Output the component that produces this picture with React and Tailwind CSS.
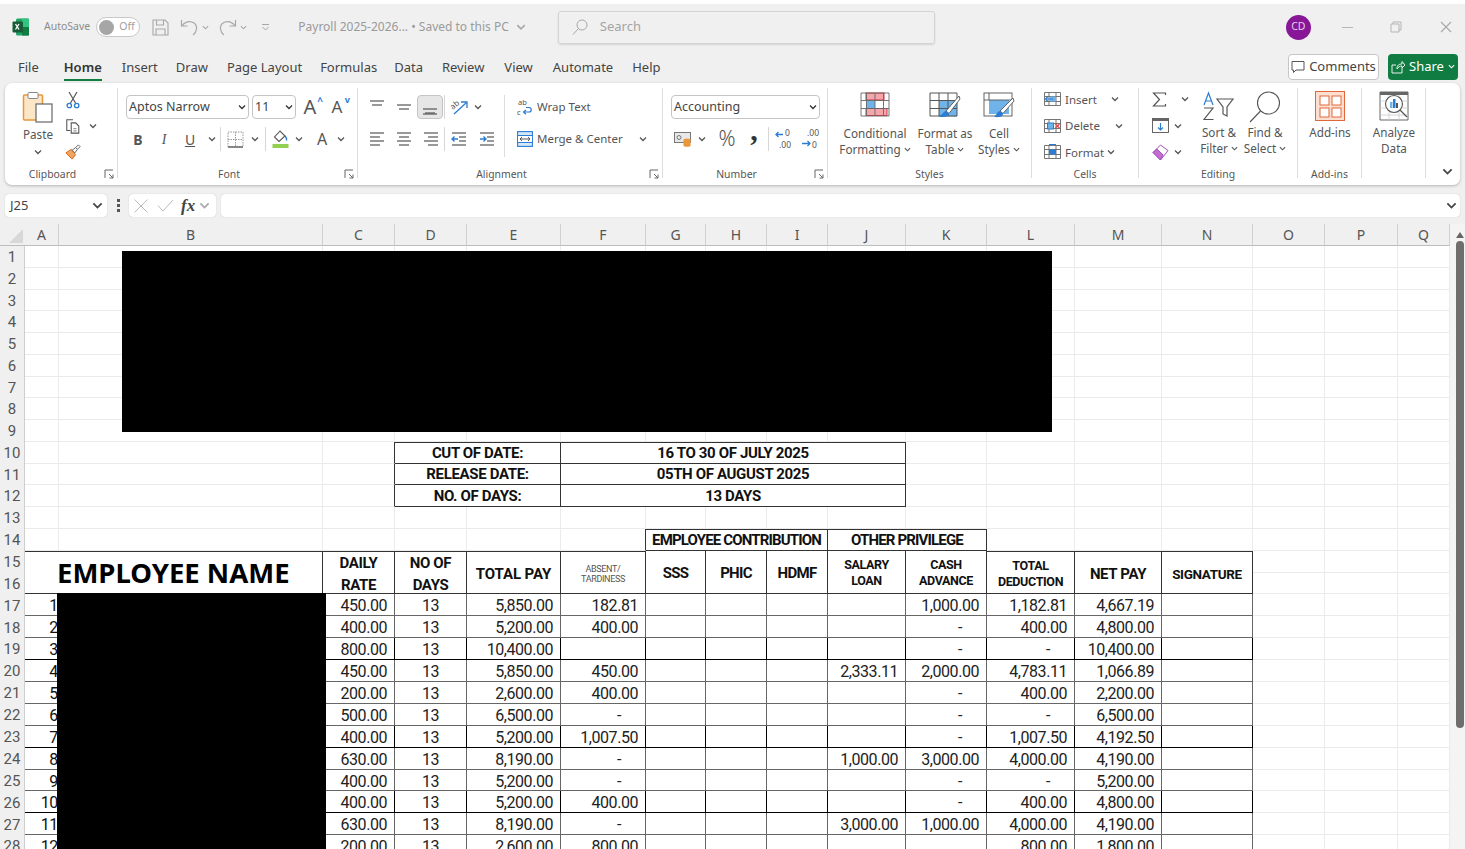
import React from "react";

const Chev = ({ s = 8, c = "#555", w = 1.3 }) => (
  <svg width={s} height={s} viewBox="0 0 8 8" className="shrink-0"><polyline points="1,2.5 4,5.5 7,2.5" fill="none" stroke={c} strokeWidth={w} /></svg>
);
const Btn = ({ w, children, className = "" }) => (
  <div className={`flex items-center justify-center shrink-0 h-full ${className}`} style={{ width: w }}>{children}</div>
);
const VLine = () => <div className="w-px h-[24px] bg-[#d6d6d6] shrink-0" />;

const Launcher = () => (
  <svg width="10" height="10" viewBox="0 0 10 10"><path d="M1 9V1h8M5 5l4 4M9 5.5V9H5.5" fill="none" stroke="#666" strokeWidth="1" /></svg>
);

const Group = ({ w, label, launcher, children, last }) => (
  <div className={`shrink-0 h-[90px] flex flex-col ${last ? "" : "border-r border-[#dcdcdc]"}`} style={{ width: w }}>
    <div className="h-[79px] shrink-0">{children}</div>
    <div className="flex items-center h-[14px] text-[10.4px] text-[#555] leading-[14px]">
      <div className="flex-1 text-center">{label}</div>
      {launcher && <div className="w-[17px] flex justify-center"><Launcher /></div>}
    </div>
  </div>
);

const Lines = ({ kind }) => {
  const ys = [3, 7, 11, 15];
  const spec = {
    l: [[1, 15], [1, 11], [1, 15], [1, 11]],
    c: [[1, 15], [3, 13], [1, 15], [3, 13]],
    r: [[1, 15], [5, 15], [1, 15], [5, 15]],
  }[kind];
  return (
    <svg width="16" height="18" viewBox="0 0 16 18">
      {spec.map((p, i) => <line key={i} x1={p[0]} x2={p[1]} y1={ys[i]} y2={ys[i]} stroke="#555" strokeWidth="1.2" />)}
    </svg>
  );
};
const VAlign = ({ pos }) => {
  const y = { t: 2, m: 6, b: 10 }[pos];
  return (
    <svg width="18" height="16" viewBox="0 0 18 16">
      <line x1="2" x2="16" y1={y} y2={y} stroke="#555" strokeWidth="1.2" />
      <line x1="4" x2="14" y1={y + 4} y2={y + 4} stroke="#555" strokeWidth="1.2" />
      {pos === "b" && <line x1="2" x2="16" y1={15} y2={15} stroke="#555" strokeWidth="1.2" />}
    </svg>
  );
};
const Indent = ({ dir }) => (
  <svg width="16" height="16" viewBox="0 0 16 16">
    {[2, 6, 10, 14].map((y) => <line key={y} x1={y === 2 || y === 14 ? 1 : 8} x2="15" y1={y} y2={y} stroke="#555" strokeWidth="1.2" />)}
    <path d={dir === "l" ? "M7 8H1M3.5 5.5L1 8l2.5 2.5" : "M1 8h6M4.5 5.5L7 8l-2.5 2.5"} fill="none" stroke="#2b7cd3" strokeWidth="1.4" />
  </svg>
);

const Excel = () => (
  <svg width="18" height="18" viewBox="0 0 18 18">
    <rect x="4" y="0.5" width="13" height="17" rx="1.5" fill="#21a366" />
    <rect x="10" y="0.5" width="7" height="8.5" fill="#33c481" />
    <rect x="10" y="9" width="7" height="8.5" fill="#107c41" />
    <rect x="0.5" y="3.5" width="10.5" height="11" rx="1" fill="#185c37" />
    <path d="M3.5 6l3.5 5.5M7 6l-3.5 5.5" stroke="#fff" strokeWidth="1.3" />
  </svg>
);

const Paste = () => (
  <svg width="32" height="32" viewBox="0 0 32 32">
    <rect x="1.5" y="4" width="19" height="25" rx="1" fill="#fbe6c8" stroke="#e8973a" strokeWidth="1.5" />
    <rect x="6" y="1.5" width="10" height="6" rx="1" fill="#fff" stroke="#8a8a8a" />
    <rect x="14" y="13" width="16" height="18" fill="#fff" stroke="#666" strokeWidth="1.2" />
  </svg>
);
const Cut = () => (
  <svg width="14" height="18" viewBox="0 0 14 18">
    <path d="M3 1l6.5 11M11 1L4.5 12" stroke="#555" strokeWidth="1.2" fill="none" />
    <circle cx="3.3" cy="14.5" r="2.2" fill="none" stroke="#2b7cd3" strokeWidth="1.3" />
    <circle cx="10.7" cy="14.5" r="2.2" fill="none" stroke="#2b7cd3" strokeWidth="1.3" />
  </svg>
);
const Copy = () => (
  <svg width="18" height="18" viewBox="0 0 18 18">
    <path d="M9 2H2v12h4" fill="none" stroke="#555" strokeWidth="1.2" />
    <path d="M7 5.5h5l3.5 3.5v8H7z" fill="#fff" stroke="#555" strokeWidth="1.2" />
    <path d="M9.5 12h3.5M9.5 14.5h3.5" stroke="#777" />
  </svg>
);
const Painter = () => (
  <svg width="18" height="18" viewBox="0 0 18 18">
    <path d="M1 10l6-4 5 6-4 5z" fill="#f2a45c" stroke="#d9691f" strokeWidth="1.1" />
    <path d="M8 7l4-3 2 2-3 4z" fill="#fff" stroke="#555" />
    <path d="M12 4l3-3 2 2-3 3" fill="none" stroke="#555" />
  </svg>
);

const Borders = () => (
  <svg width="17" height="17" viewBox="0 0 17 17">
    <path d="M1 1h15v15H1zM8.5 1v15M1 8.5h15" fill="none" stroke="#9a9a9a" strokeDasharray="1.5 1" />
    <line x1="1" x2="16" y1="16" y2="16" stroke="#555" strokeWidth="1.3" />
  </svg>
);
const Fill = () => (
  <svg width="17" height="18" viewBox="0 0 17 18">
    <path d="M8 1L2.5 7 7 11.5 13 6z" fill="#fff" stroke="#555" strokeWidth="1.1" />
    <path d="M13 6c1.5 1.5 2 3 1.5 4.5" fill="none" stroke="#2b7cd3" strokeWidth="1.5" />
    <rect x="0.5" y="14" width="16" height="4" fill="#92d050" />
  </svg>
);
const Orient = () => (
  <svg width="19" height="18" viewBox="0 0 19 18" className="overflow-visible">
    <text x="1" y="9" fontSize="8" fill="#555" transform="rotate(-40 6 8)" fontFamily="Noto Sans, sans-serif">ab</text>
    <path d="M4 16L16 5M11 4h6v6" fill="none" stroke="#2b7cd3" strokeWidth="1.3" />
  </svg>
);
const WrapIcon = () => (
  <svg width="16" height="18" viewBox="0 0 16 18" className="overflow-visible">
    <text x="1" y="7" fontSize="7.5" fill="#555" fontFamily="Noto Sans, sans-serif">ab</text>
    <text x="0" y="17" fontSize="7.5" fill="#555" fontFamily="Noto Sans, sans-serif">c</text>
    <path d="M7 14h5c3 0 3-4.5 0-4.5H9M9 12l-2.5 2L9 16.2" fill="none" stroke="#2b7cd3" strokeWidth="1.2" />
  </svg>
);
const MergeIcon = () => (
  <svg width="16" height="16" viewBox="0 0 16 16">
    <rect x="0.6" y="0.6" width="14.8" height="14.8" fill="#d5e8f8" stroke="#2b7cd3" strokeWidth="1.1" />
    <rect x="1" y="5" width="14" height="6" fill="#fff" />
    <path d="M0.6 4.5h14.8M0.6 11.5h14.8" stroke="#2b7cd3" />
    <path d="M3 8h10M5 6l-2 2 2 2M11 6l2 2-2 2" fill="none" stroke="#555" />
  </svg>
);
const Accounting = () => (
  <svg width="18" height="16" viewBox="0 0 18 16">
    <rect x="0.5" y="1.5" width="16" height="10" fill="#e8e8e8" stroke="#777" />
    <circle cx="5" cy="6.5" r="2" fill="none" stroke="#777" />
    <ellipse cx="13" cy="9" rx="3.5" ry="1.5" fill="#e8973a" />
    <rect x="9.5" y="9" width="7" height="5.5" fill="#e8973a" />
    <ellipse cx="13" cy="14.5" rx="3.5" ry="1.3" fill="#e8973a" />
  </svg>
);
const IncDec = ({ inc }) => (
  <svg width="18" height="18" viewBox="0 0 18 18" className="overflow-visible">
    <text x={inc ? 11 : 6} y="5.5" fontSize="8.5" fill="#555" fontFamily="Noto Sans, sans-serif">{inc ? "0" : ".00"}</text>
    <text x={inc ? 5 : 11} y="17.5" fontSize="8.5" fill="#555" fontFamily="Noto Sans, sans-serif">{inc ? ".00" : "0"}</text>
    <path d={inc ? "M9 4.5H2M4.5 2L2 4.5 4.5 7" : "M1 13.5h8M6.5 11L9 13.5 6.5 16"} fill="none" stroke="#2b7cd3" strokeWidth="1.3" />
  </svg>
);

const CondFmt = () => (
  <svg width="30" height="25" viewBox="0 0 30 25">
    <rect x="6" y="1" width="18" height="7" fill="#f4a6ad" stroke="#d9363e" />
    <rect x="6" y="8" width="9" height="8" fill="#6fb3e8" />
    <rect x="6" y="16.5" width="21" height="7" fill="#f4a6ad" stroke="#d9363e" />
    <path d="M1 1h28v23H1zM1 8.5h28M1 16.5h28M6.5 1v23M15 1v23M23.5 1v23" fill="none" stroke="#666" strokeWidth="0.9" />
  </svg>
);
const TableBrush = () => (
  <svg width="32" height="27" viewBox="0 0 32 27">
    <rect x="10" y="8.5" width="18" height="16" fill="#6fb3e8" />
    <path d="M1 1h27v23H1zM1 8.5h27M1 16.5h27M10 1v23M19 1v23" fill="none" stroke="#555" strokeWidth="1" />
    <path d="M30 4L17 19l3 2.5L31 7z" fill="#fff" stroke="#555" strokeWidth="0.9" />
    <path d="M17 19c-3 .5-3 3.5-7 5.5 5 1.5 9.5 0 10-3z" fill="#2b7cd3" />
  </svg>
);
const CellStyles = () => (
  <svg width="32" height="27" viewBox="0 0 32 27">
    <rect x="1" y="1" width="28" height="23" fill="#fff" stroke="#555" strokeWidth="0.9" />
    <rect x="6" y="8" width="20" height="14" fill="#6fb3e8" />
    <path d="M1 8h28M6 1v7" stroke="#555" strokeWidth="0.9" />
    <path d="M30 6L17 19l3 2.5L31 9z" fill="#fff" stroke="#555" strokeWidth="0.9" />
    <path d="M17 19c-3 .5-3 3.5-6 6 5 .5 9 0 9-3.5z" fill="#2b7cd3" />
  </svg>
);
const CellIns = ({ kind }) => (
  <svg width="17" height="16" viewBox="0 0 17 16">
    <path d="M0.5 1.5h16v13h-16zM0.5 5.5h16M0.5 10.5h16M5 1.5v13M12 1.5v13" fill="none" stroke="#666" strokeWidth="0.9" />
    {kind === "i" && <g><rect x="6" y="5.5" width="6" height="5" fill="#6fb3e8" /><path d="M9 8H1.5M4 5.5L1.5 8 4 10.5" fill="none" stroke="#2b7cd3" strokeWidth="1.2" /></g>}
    {kind === "d" && <g><rect x="3.5" y="5" width="6" height="6" fill="#6fb3e8" stroke="#2b7cd3" /><path d="M11.5 6l4 4M15.5 6l-4 4" stroke="#e04b4b" strokeWidth="1.3" /></g>}
    {kind === "f" && <g><rect x="5" y="5.5" width="7" height="5" fill="#2b7cd3" /><path d="M5 0.5H12" stroke="#2b7cd3" strokeWidth="1.2" /></g>}
  </svg>
);
const Sum = () => (
  <svg width="15" height="15" viewBox="0 0 15 15"><path d="M13.5 3V1H1.5L7.5 7.5 1.5 14h12v-2" fill="none" stroke="#555" strokeWidth="1.2" /></svg>
);
const FillDown = () => (
  <svg width="17" height="15" viewBox="0 0 17 15">
    <rect x="0.5" y="0.5" width="16" height="14" fill="#fff" stroke="#555" strokeWidth="0.9" />
    <rect x="0.5" y="0.5" width="16" height="2.5" fill="#666" />
    <path d="M8.5 5v7M6 9.5l2.5 2.5L11 9.5" fill="none" stroke="#2b7cd3" strokeWidth="1.2" />
  </svg>
);
const Eraser = () => (
  <svg width="17" height="17" viewBox="0 0 17 17">
    <path d="M1 8.5L8.5 1 16 6.5 8.5 16z" fill="#fff" stroke="#a34fb8" strokeWidth="1" />
    <path d="M1 8.5L5 5l6 6-2.5 5z" fill="#c56bd6" stroke="#a34fb8" />
  </svg>
);
const SortIcon = () => (
  <svg width="32" height="30" viewBox="0 0 32 30">
    <path d="M1 14L5.5 2 10 14M2.5 10h6" fill="none" stroke="#2b7cd3" strokeWidth="1.2" />
    <path d="M1 17h9L1 28.5h9.5" fill="none" stroke="#555" strokeWidth="1.2" />
    <path d="M14 8h16l-6 8v9l-4-2v-7z" fill="none" stroke="#555" strokeWidth="1.2" />
  </svg>
);
const FindIcon = () => (
  <svg width="32" height="32" viewBox="0 0 32 32">
    <circle cx="19.5" cy="12" r="11" fill="none" stroke="#555" strokeWidth="1.1" />
    <line x1="11.5" y1="20" x2="1" y2="31" stroke="#555" strokeWidth="1.1" />
  </svg>
);
const AddIns = () => (
  <svg width="30" height="30" viewBox="0 0 30 30">
    <rect x="0.5" y="0.5" width="29" height="29" fill="#fbe0d2" stroke="#e0673a" />
    <rect x="5" y="5" width="9" height="9" fill="#fff" stroke="#e0673a" />
    <rect x="17" y="5" width="9" height="9" fill="#fff" stroke="#e0673a" />
    <rect x="5" y="17" width="9" height="9" fill="#fff" stroke="#e0673a" />
    <rect x="17" y="17" width="9" height="9" fill="#fff" stroke="#e0673a" />
  </svg>
);
const Analyze = () => (
  <svg width="30" height="30" viewBox="0 0 30 30">
    <path d="M1 1h28v28H1z" fill="#fff" stroke="#555" strokeWidth="0.9" />
    <rect x="1" y="1" width="28" height="3" fill="#666" />
    <path d="M1 10h28M1 17h28M1 24h28M10 4v25M20 4v25" stroke="#ccc" strokeWidth="0.8" />
    <circle cx="15" cy="13" r="8.5" fill="#fff" stroke="#555" strokeWidth="1.1" />
    <rect x="11" y="11" width="2.5" height="6" fill="#6fb3e8" />
    <rect x="14" y="8" width="2.5" height="9" fill="#2b7cd3" />
    <rect x="17" y="12" width="2" height="5" fill="#555" />
    <path d="M21 19l7 7" stroke="#555" strokeWidth="1.3" />
  </svg>
);

const TitleBar = () => (
  <div className="flex items-center h-[46px] shrink-0 text-[#8c8c8c]">
    <div className="ml-[12px]"><Excel /></div>
    <span className="ml-[14px] text-[10.5px]">AutoSave</span>
    <div className="ml-[6px] w-[44px] h-[20px] rounded-full border border-[#c8c8c8] bg-white flex items-center pl-[2px] gap-[5px]">
      <div className="w-[15px] h-[15px] rounded-full bg-[#a6a6a6]" />
      <span className="text-[10.5px] text-[#a0a0a0]">Off</span>
    </div>
    <svg className="ml-[12px]" width="17" height="17" viewBox="0 0 17 17"><path d="M1 1h12l3 3v12H1zM4.5 1v5h7V1M4 16v-6h9v6" fill="none" stroke="#a8a8a8" strokeWidth="1.1" /></svg>
    <svg className="ml-[11px]" width="18" height="17" viewBox="0 0 18 17"><path d="M1.5 1v6h6M2 7c2-4 8-6 12-3s3 9-1 12" fill="none" stroke="#a8a8a8" strokeWidth="1.2" /></svg>
    <div className="ml-[4px]"><Chev s={7} c="#a8a8a8" /></div>
    <svg className="ml-[10px]" width="18" height="17" viewBox="0 0 18 17"><path d="M16.5 1v6h-6M16 7c-2-4-8-6-12-3s-3 9 1 12" fill="none" stroke="#a8a8a8" strokeWidth="1.2" /></svg>
    <div className="ml-[3px]"><Chev s={7} c="#a8a8a8" /></div>
    <svg className="ml-[14px]" width="9" height="9" viewBox="0 0 9 9"><path d="M1 1.5h7M1.5 4l3 3 3-3" fill="none" stroke="#a8a8a8" /></svg>
    <span className="ml-[28px] text-[12px] whitespace-nowrap text-[#9a9a9a]">Payroll 2025-2026... • Saved to this PC</span>
    <div className="ml-[7px]"><Chev s={10} c="#a8a8a8" /></div>
    <div className="ml-[32px] w-[377px] h-[33px] border border-[#d4d4d4] rounded-[3px] shadow-[0_1px_2px_rgba(0,0,0,0.12)] flex items-center pl-[13px] gap-[12px]">
      <svg width="16" height="17" viewBox="0 0 16 17"><circle cx="10" cy="6" r="5" fill="none" stroke="#a8a8a8" /><line x1="6.5" y1="9.5" x2="1" y2="15.5" stroke="#a8a8a8" /></svg>
      <span className="text-[13px] text-[#a4a4a4]">Search</span>
    </div>
    <div className="ml-[351px] w-[25px] h-[25px] rounded-full bg-[#881798] text-[#e6cfe9] text-[10.5px] flex items-center justify-center">CD</div>
    <div className="ml-[31px] w-[11px] h-px bg-[#b5b5b5]" />
    <svg className="ml-[37px]" width="12" height="12" viewBox="0 0 12 12"><path d="M3 3V1h8v8H9M1 3h8v8H1z" fill="none" stroke="#b5b5b5" /></svg>
    <svg className="ml-[38px]" width="12" height="12" viewBox="0 0 12 12"><path d="M1 1l10 10M11 1L1 11" stroke="#a8a8a8" strokeWidth="1.1" /></svg>
  </div>
);

const TabBar = () => (
  <div className="flex items-center h-[33px] shrink-0 text-[13px] text-[#444]">
    <div className="flex items-center pt-[3px]">
      <span className="ml-[18px]">File</span>
      <div className="ml-[25px] h-[25px] flex items-center relative font-semibold text-[#333]">
        Home
        <div className="absolute left-0 right-0 bottom-0 h-[2px] bg-[#107c41]" />
      </div>
      <span className="ml-[20px]">Insert</span>
      <span className="ml-[18px]">Draw</span>
      <span className="ml-[19px]">Page Layout</span>
      <span className="ml-[18px]">Formulas</span>
      <span className="ml-[17px]">Data</span>
      <span className="ml-[19px]">Review</span>
      <span className="ml-[20px]">View</span>
      <span className="ml-[20px]">Automate</span>
      <span className="ml-[19px]">Help</span>
    </div>
    <div className="ml-auto flex items-center gap-[9px] mr-[7px]">
      <div className="w-[91px] h-[26px] bg-white border border-[#c6c6c6] rounded-[4px] flex items-center justify-center gap-[4px]">
        <svg width="14" height="14" viewBox="0 0 14 14"><path d="M1 1.5h12v8.5H5L2.5 12.5V10H1z" fill="none" stroke="#555" /></svg>
        <span>Comments</span>
      </div>
      <div className="w-[70px] h-[26px] bg-[#107c41] rounded-[4px] flex items-center justify-center gap-[4px] text-white">
        <svg width="14" height="14" viewBox="0 0 14 14"><path d="M1 5h4M1 5v8h10V8M6 9c0-4 2-5 5-5V1.5l3 3.5-3 3V6c-2 0-4 1-5 3z" fill="none" stroke="#fff" strokeWidth="0.9" /></svg>
        <span>Share</span>
        <Chev s={7} c="#fff" />
      </div>
    </div>
  </div>
);

const Sel = ({ w, text, cls = "" }) => (
  <div className={`h-[24px] bg-white border border-[#c4c4c4] rounded-[4px] flex items-center justify-between pl-[2px] pr-[2px] text-[12.5px] text-[#444] shrink-0 ${cls}`} style={{ width: w }}>
    <span>{text}</span>
    <Chev s={8} c="#333" />
  </div>
);

const Big = ({ w, icon, l1, l2 }) => (
  <div className="flex flex-col items-center shrink-0 pt-[3px] text-[11.7px] leading-[16px] text-[#555]" style={{ width: w }}>
    <div className="h-[33px] flex items-start justify-center">{icon}</div>
    <span className="whitespace-nowrap">{l1}</span>
    {l2 && <span className="flex items-center gap-[3px] whitespace-nowrap">{l2}</span>}
  </div>
);

const CellRow = ({ icon, text, gap }) => (
  <div className="flex items-center h-[26.5px] pl-[12px] text-[11.5px] text-[#555]">
    <CellIns kind={icon} />
    <span className="ml-[4px]">{text}</span>
    <div style={{ marginLeft: gap }}><Chev s={8} /></div>
  </div>
);

const Ribbon = () => (
  <div className="mx-[5px] h-[102px] bg-white rounded-[7px] shadow-[0_1px_3px_rgba(0,0,0,0.25)] flex pt-[5px] shrink-0 text-[#444]">
    <Group w={113} label="Clipboard" launcher>
      <div className="flex">
        <div className="w-[60px] flex flex-col items-center pl-[6px] pt-[3px] text-[11.7px] text-[#555]">
          <Paste />
          <span className="mt-[3px]">Paste</span>
          <div className="mt-[4px]"><Chev s={8} /></div>
        </div>
        <div className="flex flex-col items-start -mt-px">
          <div className="h-[26px] w-[16px] flex items-center justify-center"><Cut /></div>
          <div className="h-[26px] flex items-center"><div className="w-[16px] flex justify-center"><Copy /></div><div className="ml-[8px]"><Chev s={8} /></div></div>
          <div className="h-[26px] w-[16px] flex items-center justify-center"><Painter /></div>
        </div>
      </div>
    </Group>

    <Group w={240} label="Font" launcher>
      <div className="flex flex-col pt-[7px] pl-[8px]">
        <div className="flex items-center h-[24px]">
          <Sel w={123} text="Aptos Narrow" />
          <Sel w={44} text="11" cls="ml-[3px]" />
          <div className="ml-[1px] w-[26px] text-[20px] leading-[24px] text-[#555] text-center relative">A<span className="text-[#2b7cd3] text-[10px] font-bold leading-none absolute top-[1px] right-0">^</span></div>
          <div className="ml-[1px] w-[26px] text-[17px] leading-[24px] text-[#555] text-center relative">A<span className="text-[#2b7cd3] text-[9px] font-bold leading-none absolute top-0 right-0">v</span></div>
        </div>
        <div className="flex items-center h-[30px] mt-[5px] -ml-[1px] text-[14px] text-[#555]">
          <Btn w={26}><span className="font-bold">B</span></Btn>
          <Btn w={26}><span className="italic font-['Liberation_Serif',serif]">I</span></Btn>
          <Btn w={26}><span className="underline">U</span></Btn>
          <Btn w={17}><Chev s={8} /></Btn>
          <VLine />
          <Btn w={29}><Borders /></Btn>
          <Btn w={9}><Chev s={8} /></Btn>
          <Btn w={12}><VLine /></Btn>
          <Btn w={18}><Fill /></Btn>
          <Btn w={20}><Chev s={8} /></Btn>
          <Btn w={26}><span className="text-[16px]">A</span></Btn>
          <Btn w={12}><Chev s={8} /></Btn>
        </div>
      </div>
    </Group>

    <Group w={305} label="Alignment" launcher>
      <div className="flex h-[70px] pt-[7px]">
        <div className="w-[147px] pl-[5px] border-r border-[#dcdcdc] h-[62px]">
          <div className="flex items-center h-[24px]">
            <Btn w={27}><VAlign pos="t" /></Btn>
            <Btn w={27}><VAlign pos="m" /></Btn>
            <Btn w={26} className="bg-[#e6e6e6] border border-[#c4c4c4] rounded-[4px]"><VAlign pos="b" /></Btn>
            <div className="ml-[1px] w-px h-[24px] bg-[#d6d6d6]" />
            <Btn w={29}><Orient /></Btn>
            <Chev s={8} />
          </div>
          <div className="flex items-center h-[30px] mt-[5px]">
            <Btn w={27}><Lines kind="l" /></Btn>
            <Btn w={27}><Lines kind="c" /></Btn>
            <Btn w={27}><Lines kind="r" /></Btn>
            <VLine />
            <Btn w={28}><Indent dir="l" /></Btn>
            <Btn w={27}><Indent dir="r" /></Btn>
          </div>
        </div>
        <div className="pl-[12px] text-[11.5px] text-[#555]">
          <div className="flex items-center h-[24px] gap-[4px]"><WrapIcon /><span>Wrap Text</span></div>
          <div className="flex items-center h-[30px] mt-[5px] gap-[4px]"><MergeIcon /><span>Merge &amp; Center</span><div className="ml-[12px]"><Chev s={8} /></div></div>
        </div>
      </div>
    </Group>

    <Group w={165} label="Number" launcher>
      <div className="pt-[7px] pl-[8px]">
        <Sel w={149} text="Accounting" />
        <div className="flex items-center h-[30px] mt-[5px] text-[#555]">
          <Btn w={24}><Accounting /></Btn>
          <Btn w={14}><Chev s={8} /></Btn>
          <Btn w={36}><span className="text-[21px] font-light">%</span></Btn>
          <Btn w={18}><span className="text-[30px] font-bold font-['Liberation_Serif',serif] text-[#333] leading-none -mt-[18px]">,</span></Btn>
          <div className="ml-[5px]"><VLine /></div>
          <Btn w={28}><IncDec inc /></Btn>
          <Btn w={26}><IncDec /></Btn>
        </div>
      </div>
    </Group>

    <Group w={204} label="Styles">
      <div className="flex pl-[7px] pt-[1px]">
        <Big w={80} icon={<CondFmt />} l1="Conditional" l2={<>Formatting <Chev s={7} /></>} />
        <Big w={60} icon={<TableBrush />} l1="Format as" l2={<>Table <Chev s={7} /></>} />
        <Big w={48} icon={<CellStyles />} l1="Cell" l2={<>Styles <Chev s={7} /></>} />
      </div>
    </Group>

    <Group w={107} label="Cells">
      <div className="-mt-[2px]">
        <CellRow icon="i" text="Insert" gap="14px" />
        <CellRow icon="d" text="Delete" gap="15px" />
        <CellRow icon="f" text="Format" gap="3px" />
      </div>
    </Group>

    <Group w={159} label="Editing">
      <div className="flex">
        <div className="w-[57px] pl-[13px] -mt-[2px]">
          <div className="flex items-center h-[26.5px]"><Sum /><div className="ml-[14px]"><Chev s={8} /></div></div>
          <div className="flex items-center h-[26.5px]"><FillDown /><div className="ml-[5px]"><Chev s={8} /></div></div>
          <div className="flex items-center h-[26.5px]"><Eraser /><div className="ml-[5px]"><Chev s={8} /></div></div>
        </div>
        <Big w={46} icon={<SortIcon />} l1="Sort &" l2={<>Filter <Chev s={7} /></>} />
        <Big w={46} icon={<FindIcon />} l1="Find &" l2={<>Select <Chev s={7} /></>} />
      </div>
    </Group>

    <Group w={64} label="Add-ins">
      <Big w={64} icon={<AddIns />} l1="Add-ins" />
    </Group>
    <Group w={64} label="">
      <Big w={64} icon={<Analyze />} l1="Analyze" l2="Data" />
    </Group>
    <div className="flex-1 flex items-end justify-center pl-[8px] pb-[8px]"><Chev s={11} c="#444" /></div>
  </div>
);

const FormulaBar = () => (
  <div className="flex items-center h-[23px] mt-[9px] ml-[5px] mr-[5px] shrink-0">
    <div className="w-[102px] h-full bg-white rounded-[4px] shadow-[0_0_1px_rgba(0,0,0,0.3)] flex items-center justify-between pl-[5px] pr-[4px] text-[13px] text-[#444]">
      J25<Chev s={11} c="#444" />
    </div>
    <div className="w-[22px] flex flex-col items-center gap-[2px]">
      <div className="w-[3px] h-[3px] bg-[#555]" /><div className="w-[3px] h-[3px] bg-[#555]" /><div className="w-[3px] h-[3px] bg-[#555]" />
    </div>
    <div className="w-[87px] h-full bg-white rounded-[4px] shadow-[0_0_1px_rgba(0,0,0,0.3)] flex items-center pl-[5px]">
      <svg width="14" height="14" viewBox="0 0 14 14"><path d="M0.5 0.5l13 13M13.5 0.5l-13 13" stroke="#bbb" /></svg>
      <svg className="ml-[9px]" width="17" height="13" viewBox="0 0 17 13"><path d="M1 6.5l5 5.5L16 1" fill="none" stroke="#bbb" /></svg>
      <span className="ml-[7px] italic font-bold text-[17px] leading-none text-[#444] font-['Liberation_Serif',serif]">fx</span>
      <div className="ml-[4px]"><Chev s={11} c="#aaa" /></div>
    </div>
    <div className="ml-[5px] flex-1 h-full bg-white rounded-[4px] shadow-[0_0_1px_rgba(0,0,0,0.3)] flex items-center justify-end pr-[3px]">
      <Chev s={11} c="#444" />
    </div>
  </div>
);

const cols = ["A","B","C","D","E","F","G","H","I","J","K","L","M","N","O","P","Q"];
const people = [
  ["450.00","5,850.00","182.81","","1,000.00","1,182.81","4,667.19"],
  ["400.00","5,200.00","400.00","","-","400.00","4,800.00"],
  ["800.00","10,400.00","","","-","-","10,400.00"],
  ["450.00","5,850.00","450.00","2,333.11","2,000.00","4,783.11","1,066.89"],
  ["200.00","2,600.00","400.00","","-","400.00","2,200.00"],
  ["500.00","6,500.00","-","","-","-","6,500.00"],
  ["400.00","5,200.00","1,007.50","","-","1,007.50","4,192.50"],
  ["630.00","8,190.00","-","1,000.00","3,000.00","4,000.00","4,190.00"],
  ["400.00","5,200.00","-","","-","-","5,200.00"],
  ["400.00","5,200.00","400.00","","-","400.00","4,800.00"],
  ["630.00","8,190.00","-","3,000.00","1,000.00","4,000.00","4,190.00"],
  ["200.00","2,600.00","800.00","","","800.00","1,800.00"],
];
const darkRows = [2, 6, 9];

const RowNum = ({ n }) => (
  <div className="bg-[#f0f0f0] border-r border-[#cfcfcf] flex items-center justify-center pt-[1px] text-[15px] tracking-normal text-[#555]">{n}</div>
);
const Blank = () => <div className="border-r border-b border-[#ebebeb]" />;
const Box = ({ span, bold, children, cls = "" }) => (
  <div className={`border-r border-b border-[#333] flex items-center justify-center pt-[1px] text-center text-[#111] ${bold ? "font-bold" : ""} ${cls}`} style={span ? { gridColumn: `span ${span}` } : undefined}>{children}</div>
);
const Head = ({ children, cls = "", lh = "leading-[22px]" }) => (
  <div className={`row-span-2 border-r border-b border-[#333] flex items-center justify-center pt-[2px] text-center font-bold text-[#111] ${lh} ${cls}`}>{children}</div>
);

const Num = ({ v, dark }) => (
  <div className={`border-r border-b flex items-center justify-end pt-[3px] text-[16px] tracking-[-0.45px] ${dark ? "border-[#000]" : "border-[#666]"} ${v === "-" ? "pr-[24px]" : "pr-[7px]"} text-[#222]`}>{v}</div>
);
const Center = ({ v, dark }) => (
  <div className={`border-r border-b flex items-center justify-center pt-[3px] text-[16px] tracking-[-0.45px] ${dark ? "border-[#000]" : "border-[#666]"} text-[#222]`}>{v}</div>
);

const Sheet = () => {
  const rows = [];
  for (let r = 1; r <= 9; r++) {
    rows.push(<RowNum key={`n${r}`} n={r} />);
    cols.forEach((c) => rows.push(<Blank key={`${c}${r}`} />));
  }
  const info = [["CUT OF DATE:", "16 TO 30 OF JULY 2025"], ["RELEASE DATE:", "05TH OF AUGUST 2025"], ["NO. OF DAYS:", "13 DAYS"]];
  info.forEach((row, i) => {
    const r = 10 + i;
    rows.push(<RowNum key={`n${r}`} n={r} />);
    for (let k = 0; k < 2; k++) rows.push(<Blank key={`a${r}${k}`} />);
    rows.push(<div key={`c${r}`} className="border-r border-b border-[#ebebeb] border-r-[#333]" />);
    rows.push(<Box key={`d${r}`} span={2} bold cls={i === 0 ? "border-t" : ""}>{row[0]}</Box>);
    rows.push(<Box key={`f${r}`} span={5} bold cls={i === 0 ? "border-t" : ""}>{row[1]}</Box>);
    for (let k = 0; k < 7; k++) rows.push(<Blank key={`k${r}${k}`} />);
  });
  rows.push(<RowNum key="n13" n={13} />);
  cols.forEach((c) => rows.push(<Blank key={`${c}13`} />));
  rows.push(<RowNum key="n14" n={14} />);
  for (let k = 0; k < 6; k++) rows.push(<div key={`h14${k}`} className={`border-r border-b border-[#ebebeb] ${k === 5 ? "border-r-[#333]" : ""}`} />);
  rows.push(<Box key="ec" span={3} bold cls="border-t tracking-[-0.85px]">EMPLOYEE CONTRIBUTION</Box>);
  rows.push(<Box key="op" span={2} bold cls="border-t tracking-[-0.85px]">OTHER PRIVILEGE</Box>);
  for (let k = 0; k < 6; k++) rows.push(<Blank key={`t14${k}`} />);

  rows.push(<RowNum key="n15" n={15} />);
  rows.push(<div key="emp" className="col-span-2 row-span-2 border-t border-r border-b border-[#333] flex items-center pt-[1px] pl-[32px] font-['Noto_Sans',sans-serif] tracking-normal font-bold text-[27.5px] text-black whitespace-nowrap">EMPLOYEE NAME</div>);
  rows.push(<Head key="h1" cls="border-t">DAILY<br />RATE</Head>);
  rows.push(<Head key="h2" cls="border-t">NO OF<br />DAYS</Head>);
  rows.push(<Head key="h3" cls="border-t tracking-[-0.1px]">TOTAL PAY</Head>);
  rows.push(<Head key="h4" lh="leading-[10px]" cls="border-t !font-normal text-[9px] !text-[#555]">ABSENT/<br />TARDINESS</Head>);
  rows.push(<Head key="h5" cls="tracking-[-0.7px]">SSS</Head>);
  rows.push(<Head key="h6" cls="tracking-[-0.7px]">PHIC</Head>);
  rows.push(<Head key="h7" cls="tracking-[-0.7px]">HDMF</Head>);
  rows.push(<Head key="h8" lh="leading-[16px]" cls="text-[12.5px]">SALARY<br />LOAN</Head>);
  rows.push(<Head key="h9" lh="leading-[16px]" cls="text-[12.5px]">CASH<br />ADVANCE</Head>);
  rows.push(<Head key="h10" lh="leading-[16px]" cls="text-[12.5px] border-t">TOTAL<br />DEDUCTION</Head>);
  rows.push(<Head key="h11" cls="border-t">NET PAY</Head>);
  rows.push(<Head key="h12" cls="border-t text-[13.5px]">SIGNATURE</Head>);
  for (let k = 0; k < 3; k++) rows.push(<Blank key={`o15${k}`} />);
  rows.push(<RowNum key="n16" n={16} />);
  for (let k = 0; k < 3; k++) rows.push(<Blank key={`o16${k}`} />);

  people.forEach((p, i) => {
    const r = 17 + i;
    const dark = darkRows.includes(i);
    rows.push(<RowNum key={`n${r}`} n={r} />);
    rows.push(<div key={`a${r}`} className={`flex items-center justify-end pt-[3px] pr-[1px] text-[16px] text-[#111] border-b ${dark ? "border-[#000]" : "border-[#666]"}`}>{i + 1}</div>);
    rows.push(<div key={`b${r}`} className={`border-r border-b ${dark ? "border-[#000]" : "border-[#666]"}`} />);
    rows.push(<Num key={`c${r}`} v={p[0]} dark={dark} />);
    rows.push(<Center key={`d${r}`} v="13" dark={dark} />);
    rows.push(<Num key={`e${r}`} v={p[1]} dark={dark} />);
    rows.push(<Num key={`f${r}`} v={p[2]} dark={dark} />);
    rows.push(<Num key={`g${r}`} v="" dark={dark} />);
    rows.push(<Num key={`h${r}`} v="" dark={dark} />);
    rows.push(<Num key={`i${r}`} v="" dark={dark} />);
    rows.push(<Num key={`j${r}`} v={p[3]} dark={dark} />);
    rows.push(<Num key={`k${r}`} v={p[4]} dark={dark} />);
    rows.push(<Num key={`l${r}`} v={p[5]} dark={dark} />);
    rows.push(<Num key={`m${r}`} v={p[6]} dark={dark} />);
    rows.push(<Num key={`n_${r}`} v="" dark={dark} />);
    for (let k = 0; k < 3; k++) rows.push(<Blank key={`z${r}${k}`} />);
  });

  return (
    <div className="flex-1 relative min-h-0 overflow-hidden mt-[7px] font-['Roboto',sans-serif] text-[15px] tracking-[-0.35px]">
      <div className="grid w-[1450px] grid-cols-[25px_34px_264px_72px_72px_94px_85px_60px_61px_61px_78px_81px_88px_87px_91px_72px_73px_52px] grid-rows-[22px_repeat(13,21.75px)_repeat(15,21.9px)] bg-white">
        <div className="bg-[#f0f0f0] border-b border-[#bdbdbd] flex items-end justify-end p-[2px]">
          <div className="w-0 h-0 border-l-[14px] border-l-transparent border-b-[14px] border-b-[#d8d8d8]" />
        </div>
        {cols.map((c) => (
          <div key={c} className="bg-[#f0f0f0] border-r border-b border-[#d0d0d0] border-b-[#bdbdbd] flex items-center justify-center font-['Noto_Sans',sans-serif] tracking-normal text-[14px] text-[#555]">{c}</div>
        ))}
        {rows}
      </div>
      <div className="absolute left-[122px] top-[27px] w-[930px] h-[181px] bg-black" />
      <div className="absolute left-[57px] top-[369px] w-[269px] h-[260px] bg-black" />
      <div className="absolute right-0 top-0 bottom-0 w-[15px] bg-[#f4f4f4] flex flex-col items-center pt-[8px]">
        <div className="w-0 h-0 border-x-[4px] border-x-transparent border-b-[6px] border-b-[#666] ml-[5px]" />
        <div className="ml-[5px] mt-[3px] w-[8px] h-[487px] rounded-full bg-[#6e6e6e]" />
      </div>
    </div>
  );
};

export default function App() {
  return (
    <div className="w-[1465px] h-[849px] overflow-hidden bg-[#f0f0f0] flex flex-col font-['Noto_Sans',sans-serif] border-t-[4px] border-white">
      <TitleBar />
      <TabBar />
      <Ribbon />
      <FormulaBar />
      <Sheet />
    </div>
  );
}
